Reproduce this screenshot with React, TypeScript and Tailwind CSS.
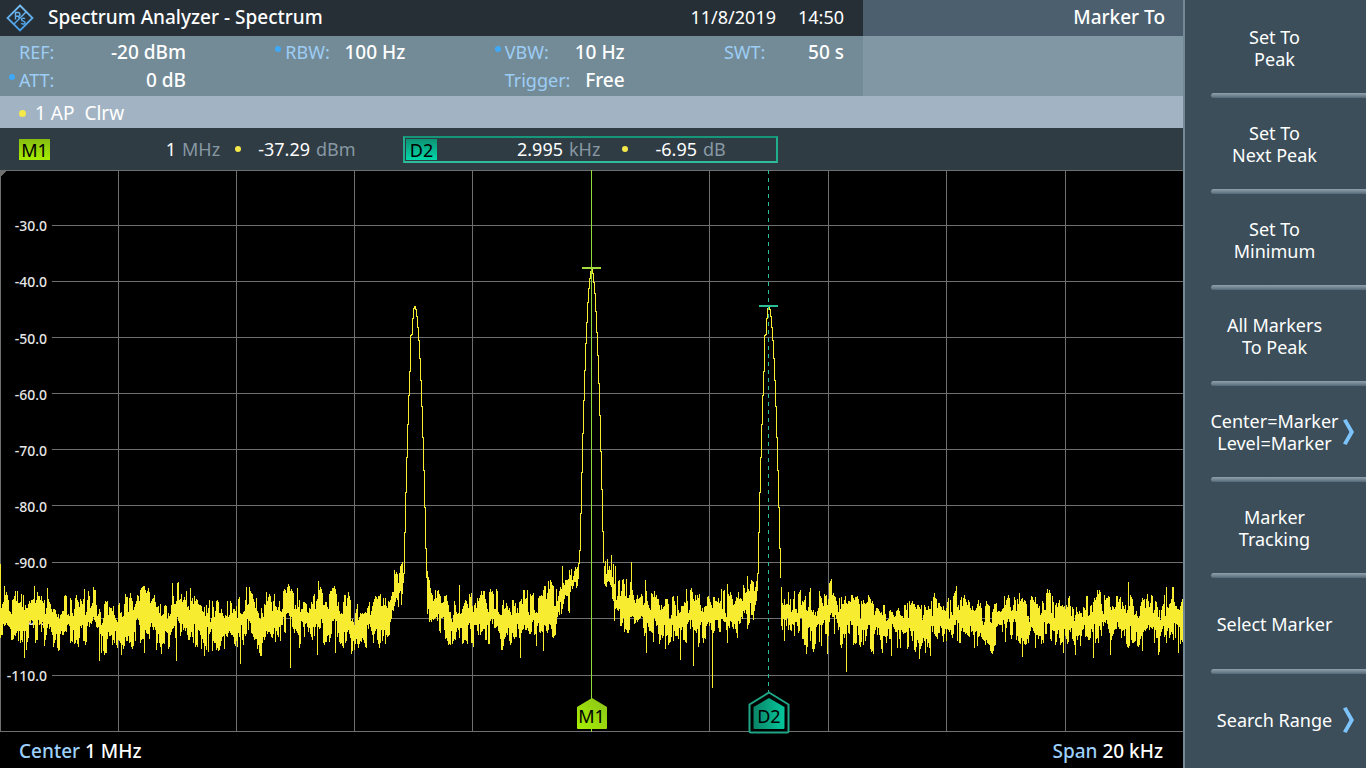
import clsx from "clsx";

const CHART_W = 1183;
const CHART_H = 562;

const H_LINES = [56, 112, 168, 224, 280, 336, 393, 449, 506];
// the centre line is left out, marker M1 runs along it
const V_LINES = [0, 118, 236, 354, 472, 709, 828, 946, 1065];

const LEVELS = ["-30.0", "-40.0", "-50.0", "-60.0", "-70.0", "-80.0", "-90.0", "-100.0", "-110.0"];

// one y value per pixel column, chart coordinates
const SIDE_PEAK = [
  403, 362, 322, 287, 254, 225, 201, 165, 164, 148, 138, 136, 139, 146, 157, 170, 188, 210, 236, 267,
  300, 337, 378, 407,
];
const MAIN_PEAK = [
  393, 380, 343, 302, 263, 230, 200, 173, 152, 132, 118, 108, 101, 99, 103, 112, 123, 141, 162, 185,
  213, 245, 281, 319, 361, 392,
];

const PEAKS = [
  { start: 403, points: SIDE_PEAK },
  { start: 578, points: MAIN_PEAK },
  { start: 757, points: SIDE_PEAK },
];

// columns where the noise reaches well past its usual band
const SPIKES: Record<number, number> = {
  0: 394, 24: 488, 47: 418, 84: 419, 99: 491, 144: 483, 172: 413, 176: 491, 178: 412, 204: 486,
  240: 494, 290: 498, 297: 418, 317: 485, 335: 483, 379: 478, 394: 400, 459: 415, 520: 488,
  543: 481, 562: 396, 569: 400, 605: 391, 611: 385, 615: 396, 631: 392, 646: 483, 680: 490,
  693: 496, 699: 424, 712: 518, 727: 414, 747: 406, 806: 484, 810: 418, 827: 484, 846: 502,
  891: 486, 919: 489, 930: 486, 956: 416, 1022: 487, 1063: 483, 1075: 485, 1093: 488, 1110: 485,
  1128: 412, 1142: 481, 1166: 417, 1178: 483,
};

function random(seed: number) {
  let s = seed;
  return () => {
    s = (s * 1664525 + 1013904223) % 4294967296;
    return s / 4294967296;
  };
}

function noiseFloor(x: number) {
  if (x > 385 && x < 403) return 444 - (x - 385) * 1.4;
  if (x > 426 && x < 445) return 438 + (x - 426) / 2;
  if (x > 520 && x < 579) return 446 - ((x - 520) / 58) ** 2 * 42;
  if (x > 603 && x < 614) return 408;
  if (x >= 614 && x < 660) return 428 + (x - 614) / 2.5;
  if (x > 740 && x < 757) return 442 - (x - 740) * 1.2;
  if (x > 779 && x < 800) return 434 + (x - 779) * 0.8;
  return 449;
}

function buildTrace() {
  const next = random(77);
  let drift = 0;
  let up = 8;
  let down = 8;
  let d = "";
  let last = 448;
  for (let x = 0; x < CHART_W; x++) {
    const peak = PEAKS.find((p) => x >= p.start && x < p.start + p.points.length);
    if (peak) {
      const y = peak.points[x - peak.start];
      d += `M${x + 0.5} ${Math.min(y, last)}V${Math.max(y, last) + 1}`;
      last = y;
      continue;
    }
    drift = drift * 0.85 + (next() - 0.5) * 9;
    // an extreme often lasts for two or three columns
    if (next() < 0.58) up = 4 + next() ** 1.2 * 22;
    if (next() < 0.58) down = 5 + next() ** 1.2 * 24;
    const mid = noiseFloor(x) + drift;
    const nearSkirt = noiseFloor(x) < 430 ? 0.75 : 1;
    let top = mid - up * nearSkirt;
    let bottom = mid + down * nearSkirt;
    const spike = SPIKES[x];
    if (spike !== undefined) {
      if (spike < mid) top = spike;
      else bottom = spike;
    }
    d += `M${x + 0.5} ${Math.round(top)}V${Math.round(bottom)}`;
    last = Math.round(mid);
  }
  return d;
}

const TRACE = buildTrace();

const SOFT_KEYS = [
  { lines: ["Set To", "Peak"] },
  { lines: ["Set To", "Next Peak"] },
  { lines: ["Set To", "Minimum"] },
  { lines: ["All Markers", "To Peak"] },
  { lines: ["Center=Marker", "Level=Marker"], submenu: true },
  { lines: ["Marker", "Tracking"] },
  { lines: ["Select Marker"] },
  { lines: ["Search Range"], submenu: true },
];

const SETTINGS = [
  { label: "REF:", value: "-20 dBm" },
  { label: "RBW:", value: "100 Hz", manual: true },
  { label: "VBW:", value: "10 Hz", manual: true },
  { label: "SWT:", value: "50 s" },
  { label: "ATT:", value: "0 dB", manual: true },
  null,
  { label: "Trigger:", value: "Free" },
];

function Logo() {
  return (
    <svg viewBox="0 0 28 28" className="size-7" fill="none">
      <defs>
        <linearGradient id="logo" x1="0" y1="0" x2="0" y2="28" gradientUnits="userSpaceOnUse">
          <stop offset="0" stopColor="#7cc0f2" />
          <stop offset="1" stopColor="#3f9be8" />
        </linearGradient>
      </defs>
      <g stroke="url(#logo)">
        <path d="M14 1.500 26.500 14 14 26.500 1.500 14Z" strokeWidth="1.800" />
        <path d="M8 20 20 8" strokeWidth="1.400" />
        <path d="M9.500 15.500V8.500h2.500a1.900 1.900 0 0 1 0 3.800h-2.500M12 12.300l1.800 2" strokeWidth="1.400" />
        <path
          d="M19 14.800c-1-1-3.500-.8-3.500.9 0 1.900 3.600 1.100 3.600 3 0 1.700-2.800 1.700-3.800.6"
          strokeWidth="1.400"
        />
      </g>
    </svg>
  );
}

function Header() {
  return (
    <header className="flex h-9 text-[18px] leading-[34px] text-white">
      <div className="flex flex-1 bg-[#262f36] pl-[6px] pr-[19px]">
        <div className="flex items-center">
          <Logo />
        </div>
        <h1 className="ml-[14px] flex-1 text-[19px] font-medium">Spectrum Analyzer - Spectrum</h1>
        <time className="mr-[22px]">11/8/2019</time>
        <time>14:50</time>
      </div>
      <div className="w-80 bg-[#4b5f6f] pr-[18px] text-right text-[19px] font-medium">Marker To</div>
    </header>
  );
}

function Settings() {
  return (
    <div className="flex h-[60px]">
      <dl className="grid flex-1 grid-cols-[167px_120px_120px_120px] content-center justify-between bg-[#738b97] pl-[19px] pr-[19px] text-[18px] leading-7">
        {SETTINGS.map((s, i) =>
          s ? (
            <div key={s.label} className="relative flex justify-between">
              {s.manual && <span className="absolute -left-[10px] top-2 size-[6px] rounded-full bg-[#3fa9f8]" />}
              <dt className="text-[#9dcdf5]">{s.label}</dt>
              <dd className="text-[19px] font-medium text-white">{s.value}</dd>
            </div>
          ) : (
            <div key={i} />
          ),
        )}
      </dl>
      <div className="w-80 bg-[#8297a4]" />
    </div>
  );
}

interface ReadoutProps {
  name: string;
  freq: string;
  freqUnit: string;
  level: string;
  levelUnit: string;
  active?: boolean;
}

function Readout({ name, freq, freqUnit, level, levelUnit, active }: ReadoutProps) {
  return (
    <div
      className={clsx(
        "grid h-[27px] w-[375px] grid-cols-[31px_120px_42px_16px_58px_1fr] items-center gap-x-[6px] border-2 pl-px text-[18px] leading-[22px]",
        active ? "border-t-[#16977a] border-x-[#1fae8e] border-b-[#30bd9e]" : "border-transparent",
      )}
    >
      <span
        className={clsx(
          "h-[21px] bg-linear-to-b text-center text-black",
          active ? "from-[#0c9374] to-[#00d8a8]" : "from-[#86bd10] to-[#a6ee00]",
        )}
      >
        {name}
      </span>
      <span className="text-right text-white">{freq}</span>
      <span className="text-[#8798a3]">{freqUnit}</span>
      <span className="size-[6px] justify-self-center rounded-full bg-[#f5e84b]" />
      <span className="text-right text-white">{level}</span>
      <span className="text-[#8798a3]">{levelUnit}</span>
    </div>
  );
}

function Chart() {
  return (
    <section className="relative min-h-0 flex-1 bg-black">
      <svg
        viewBox={`0 0 ${CHART_W} ${CHART_H}`}
        preserveAspectRatio="none"
        className="absolute inset-0 size-full"
        shapeRendering="crispEdges"
      >
        <g stroke="#6f6f6f">
          <path d={V_LINES.map((x) => `M${x + 0.5} 0V${CHART_H}`).join("")} />
          <path d={H_LINES.map((y) => `M52 ${y - 0.5}H${CHART_W}`).join("")} />
          <path d={`M0 .5H${CHART_W}M0 ${CHART_H - 0.5}H${CHART_W}`} />
        </g>
        <path d="M0 0H7L0 7Z" fill="#6f6f6f" />
      </svg>

      <ul className="absolute inset-0 grid w-[47px] grid-rows-10 text-right text-sm font-medium leading-4 text-[#e6e6e6]">
        {LEVELS.map((level) => (
          <li key={level} className="flex translate-y-2 items-end justify-end">
            {level}
          </li>
        ))}
      </ul>

      <svg
        viewBox={`0 0 ${CHART_W} ${CHART_H}`}
        preserveAspectRatio="none"
        className="absolute inset-0 size-full"
        shapeRendering="crispEdges"
      >
        <path d={TRACE} stroke="#f8ec31" />
        <path d={`M591.500 0V${CHART_H}`} stroke="#94dc3c" />
        <path d="M582 98H601" stroke="#a5dc3c" strokeWidth="2" />
        <path d="M768.500 0V530" stroke="#2bbf98" strokeDasharray="4 4" />
        <path d="M759 136H778" stroke="#2bbf98" strokeWidth="2" />
      </svg>

      <div className="absolute bottom-[3px] left-[50%] h-[31px] w-8 -translate-x-1/2">
        <svg viewBox="0 0 32 31" className="absolute inset-0">
          <defs>
            <linearGradient id="m1" x1="0" y1="1" x2="1" y2="0">
              <stop offset="0" stopColor="#a6ee00" />
              <stop offset="1" stopColor="#8cc41c" />
            </linearGradient>
          </defs>
          <path d="M16 0 31 9V30a1 1 0 0 1-1 1H2a1 1 0 0 1-1-1V9Z" fill="url(#m1)" />
        </svg>
        <span className="relative block pt-[6px] text-center text-[18px] leading-6">M1</span>
      </div>

      <div className="absolute -bottom-[2px] left-[65%] h-[43px] w-[42px] -translate-x-1/2">
        <svg viewBox="0 0 42 43" className="absolute inset-0">
          <defs>
            <linearGradient id="d2" x1="0" y1="0" x2="1" y2="0">
              <stop offset="0" stopColor="#0a8468" />
              <stop offset="1" stopColor="#04c79b" />
            </linearGradient>
          </defs>
          <path
            d="M21 1.500 40.500 13.500V40a1.500 1.500 0 0 1-1.500 1.500H3A1.500 1.500 0 0 1 1.500 40V13.500Z"
            fill="#000"
            stroke="#1fa585"
            strokeWidth="2"
          />
          <path d="M21 7 36.500 16V37a1 1 0 0 1-1 1H6.500a1 1 0 0 1-1-1V16Z" fill="url(#d2)" />
        </svg>
        <span className="relative block pt-[13px] text-center text-[18px] leading-6">D2</span>
      </div>
    </section>
  );
}

function SoftKeys() {
  return (
    <nav className="flex w-[183px] flex-col border-l-2 border-[#748996] bg-[#3b4e59]">
      {SOFT_KEYS.map((key, i) => (
        <button
          key={key.lines.join(" ")}
          className="relative flex flex-1 flex-col items-center justify-center pr-[2px] text-[18px] leading-[22px] text-white"
        >
          {key.lines.map((line) => (
            <span key={line}>{line}</span>
          ))}
          {key.submenu && (
            <svg viewBox="0 0 11 26" className="absolute right-3 top-1/2 h-[26px] w-[11px] -translate-y-1/2">
              <path d="M0 1.500 3.500 0 11 13 3.500 26 0 24.500 6.500 13Z" fill="#7cc4fa" />
            </svg>
          )}
          {i < SOFT_KEYS.length - 1 && (
            <span className="absolute -bottom-[2px] left-[26px] right-0 h-[5px] rounded-l-sm bg-linear-to-b from-[#8fa1ad] to-[#566b79]" />
          )}
        </button>
      ))}
    </nav>
  );
}

export default function App() {
  return (
    <div className="flex h-screen overflow-hidden bg-black font-['Noto_Sans',sans-serif]">
      <main className="flex min-w-0 flex-1 flex-col">
        <Header />
        <Settings />
        <div className="flex h-8 items-center bg-[#a2b4c3] pl-[19px] pt-[2px] text-[19px] text-white">
          <span className="mr-[9px] size-[7px] rounded-full bg-[#f5e84b]" />
          <span className="mr-[10px]">1 AP</span>
          <span>Clrw</span>
        </div>
        <div className="flex h-[42px] items-center gap-3 bg-[#303c44] pl-4">
          <Readout name="M1" freq="1" freqUnit="MHz" level="-37.29" levelUnit="dBm" />
          <Readout name="D2" freq="2.995" freqUnit="kHz" level="-6.95" levelUnit="dB" active />
        </div>
        <Chart />
        <footer className="flex h-9 items-center justify-between pl-[19px] pr-5 pt-[2px] text-[19px] font-medium text-white">
          <p>
            <span className="text-[#9dd0fb]">Center</span> 1 MHz
          </p>
          <p>
            <span className="text-[#9dd0fb]">Span</span> 20 kHz
          </p>
        </footer>
      </main>
      <SoftKeys />
    </div>
  );
}
